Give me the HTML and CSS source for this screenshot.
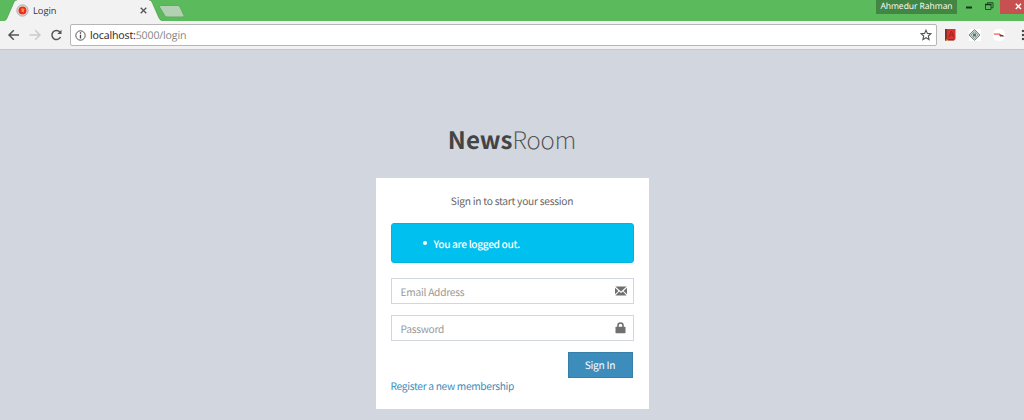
FILE: index.html
```html
<!DOCTYPE html>
<html lang="en">
<head>
<meta charset="utf-8">
<title>Login</title>
<link rel="stylesheet" href="styles.css">
</head>
<body>
<header class="browser">
  <div class="tabs">
    <svg class="tab-shape" width="190" height="21" viewBox="0 0 190 21">
      <path d="M0 0H15L6 20H0z" fill="#5aba5c"/>
      <path d="M4 21Q6 20.500 7 18L14 2Q15 0 17 0H149Q151 0 152 2L159 18Q160 20.500 163 21z" fill="#f2f2f2"/>
      <path d="M4 21Q6 20.500 7 18L14 2Q15 0 17 0M149 0Q151 0 152 2L159 18Q160 20.500 163 21" fill="none" stroke="#4a994b" stroke-width=".7"/>
      <path d="M160 5.500H178Q179.500 5.500 180 7L184 15.500Q184.500 17 183 17H167Q165.500 17 165 16L159.500 7Q159 5.500 160 5.500z" fill="#b1d1b2" stroke="#65a766"/>
    </svg>
    <div class="tab">
      <svg width="13" height="13" viewBox="0 0 13 13"><circle cx="6.500" cy="6.500" r="5.600" fill="#e7e2df" stroke="#8b9c9b" stroke-width=".8"/><circle cx="6.500" cy="6.500" r="4" fill="#ed2b25"/><path d="M5.500 4L8.500 5L7.500 8.500L5.500 7.500z" fill="#f59a28"/></svg>
      <span class="tab-title">Login</span>
      <svg class="tab-close" width="7" height="7" viewBox="0 0 7 7"><path d="M.7.700L6.300 6.300M6.300.700L.7 6.300" stroke="#555" stroke-width="1.300"/></svg>
    </div>
    <div class="window-controls">
      <span class="profile">Ahmedur Rahman</span>
      <svg class="minimize" width="7" height="3" viewBox="0 0 7 3"><path d="M0 1.500H6" stroke="#17351a" stroke-width="2"/></svg>
      <svg class="restore" width="9" height="8" viewBox="0 0 9 8"><path d="M.5 2.500H6V7.500H.5zM2.500 2.500V.700H8V5.800H6" fill="none" stroke="#23502a"/><path d="M0 2.500H6.500" stroke="#17351a" stroke-width="1.500"/></svg>
      <span class="close"><svg width="7" height="7" viewBox="0 0 7 7"><path d="M.8.800L6 6M6 .8L.8 6" stroke="#fff" stroke-width="1.400"/></svg></span>
    </div>
  </div>
  <div class="toolbar">
    <svg class="nav" width="64" height="14" viewBox="0 0 64 14" fill="none" stroke-width="1.500">
      <path d="M19 7H9.500M13.800 2.200L9 7L13.800 11.800" stroke="#555"/>
      <path d="M29.500 7H39.500M35.200 2.200L40 7L35.200 11.800" stroke="#ccc"/>
      <path d="M60.500 9A4.500 4.500 0 1 1 59.800 4" stroke="#555"/><path d="M61.500 1.800V6H57.300z" fill="#555"/>
    </svg>
    <div class="address">
      <svg width="11" height="11" viewBox="0 0 11 11"><circle cx="5.500" cy="5.500" r="4.700" fill="none" stroke="#555"/><path d="M5.500 2.300V3.700M5.500 4.700V8.500" stroke="#444" stroke-width="1.300"/></svg>
      <span class="url">localhost:<span class="path">5000/login</span></span>
      <svg class="star" width="12" height="12" viewBox="0 0 12 12"><path d="M6 1.100L7.400 4.400L11 4.700L8.300 7L9.100 10.600L6 8.700L2.900 10.600L3.700 7L1 4.700L4.600 4.400z" fill="none" stroke="#555" stroke-width="1.100"/></svg>
    </div>
    <svg class="extensions" width="86" height="16" viewBox="0 0 86 16">
      <path d="M7 2H17.500V12L16 13.500H7z" fill="#d5342f"/><path d="M7 2H9V13.500H7z" fill="#8d2927"/><path d="M10.800 10.500L13.500 4L16 10.500M11.500 8H15.500" fill="none" stroke="#a32220"/><path d="M9 12.800H16" stroke="#6e302d"/><path d="M8.500 11.500L10.500 14H8.500z" fill="#eabc3b"/>
      <rect x="31" y="2" width="12" height="12" fill="#fff"/><path d="M36.500 2.500L42 8L36.500 13.500L31 8z" fill="#c9d1cd" stroke="#7b8783"/><path d="M36.500 4.700L39.800 8L36.500 11.300L33.200 8z" fill="#e3eae6" stroke="#7b8783" stroke-width=".8"/><rect x="35" y="6.500" width="3" height="3" fill="#4e8269"/>
      <rect x="55" y="2" width="12" height="12" rx="5" fill="#fff"/><path d="M55.500 6.500H62" stroke="#92dcc7"/><path d="M56 7.500H63" stroke="#f08c82"/><path d="M61 7.500Q65 7.200 66.500 9.500H62z" fill="#65433d"/>
      <g fill="#444"><circle cx="85" cy="4" r="1.200"/><circle cx="85" cy="8" r="1.200"/><circle cx="85" cy="12" r="1.200"/></g>
    </svg>
  </div>
</header>
<main class="page">
  <h1 class="logo"><b>News</b><span class="thin">Room</span></h1>
  <form class="card">
    <p class="intro">Sign in to start your session</p>
    <div class="alert"><i class="bullet"></i>You are logged out.</div>
    <div class="field"><span>Email Address</span>
      <svg width="12" height="10" viewBox="0 0 12 10"><path d="M.3.500H11.700L6 5.400zM0 1.700L3.500 4.900L0 8.300zM12 1.700V8.300L8.500 4.900zM.4 9.500L4.200 5.500L6 7L7.800 5.500L11.600 9.500z" fill="#707070"/></svg>
    </div>
    <div class="field"><span>Password</span>
      <svg width="12" height="12" viewBox="0 0 12 12"><path d="M3 5V3.500Q3 1 5.500 1T8 3.500V5" fill="none" stroke="#707070" stroke-width="1.600"/><rect x=".5" y="4.800" width="10" height="6.400" rx=".6" fill="#707070"/></svg>
    </div>
    <div class="button">Sign In</div>
    <a class="register">Register a new membership</a>
  </form>
</main>
</body>
</html>
```
FILE: styles.css
```css
* { box-sizing: border-box; }
body {
  margin: 0;
  height: 420px;
  overflow: hidden;
  background: #d2d6de;
  font-family: "Noto Sans CJK JP", "Open Sans", sans-serif;
  font-size: 10.200px;
  letter-spacing: -.25px;
  color: #666;
  text-rendering: geometricPrecision;
}
svg { display: block; flex: none; }
.browser { height: 50px; background: #f2f2f2; border-bottom: 1px solid #c5c7cb; font-family: "Open Sans", sans-serif; letter-spacing: 0; }
.tabs { position: relative; display: flex; height: 21px; background: #5aba5c; }
.tab-shape { position: absolute; left: 0; top: 0; }
.tab { position: relative; display: flex; align-items: center; width: 149px; padding-left: 16px; }
.tab-title { margin-left: 4px; font-size: 9.300px; color: #333; }
.tab-close { margin-left: auto; margin-right: 2px; }
.window-controls { display: flex; margin-left: auto; height: 14px; }
.profile { width: 81px; line-height: 13px; text-align: center; color: #fff; background: #418643; font-size: 8.600px; letter-spacing: -.07px; font-weight: 500; white-space: nowrap; }
.minimize { margin: 6px 12px 0 9px; }
.restore { margin: 2px 6px 0 0; }
.close { width: 24px; height: 14px; padding: 3px 0 0 15px; background: #c75050; }
.toolbar { display: flex; align-items: center; height: 28px; }
.address { display: flex; align-items: center; width: 867px; height: 22px; margin-left: 6px; padding: 0 4px 0 4px; background: #fff; border: 1px solid #b6b6b6; border-radius: 2px; }
.url { margin: 1px 0 0 4px; font-size: 10.600px; letter-spacing: -.15px; color: #222; }
.path { color: #858585; }
.star { margin-left: auto; }
.extensions { margin-left: 1px; }
.page { display: flex; flex-direction: column; align-items: center; }
.logo { display: flex; margin: 69px 0 0; height: 40px; line-height: 40px; font-size: 24.100px; letter-spacing: 0; font-weight: 400; color: #444; }
.logo b { font-weight: 700; }
.thin { font-weight: 100; -webkit-text-stroke: .2px #444; }
.card { width: 273px; height: 231px; margin-top: 19px; padding: 15px; background: #fff; }
.intro { margin: 0; height: 30px; line-height: 16px; text-align: center; }
.alert { display: flex; align-items: center; height: 40px; margin-bottom: 15px; padding-left: 31px; border: 1px solid #00b5db; border-radius: 3px; background: #00c0ef; color: #fff; font-weight: 500; letter-spacing: -.35px; }
.bullet { width: 4px; height: 4px; margin-right: 7px; border-radius: 50%; background: #fff; }
.field { display: flex; align-items: center; justify-content: space-between; height: 26px; margin-bottom: 11px; padding: 0 6px 0 9px; border: 1px solid #d2d6de; color: #999; }
.button { width: 65px; height: 26px; margin-left: auto; margin-right: 1px; border: 1px solid #367fa9; background: #3c8dbc; color: #fff; line-height: 24px; text-align: center; }
.register { display: block; line-height: 16px; letter-spacing: -.31px; color: #3c8dbc; }
```
